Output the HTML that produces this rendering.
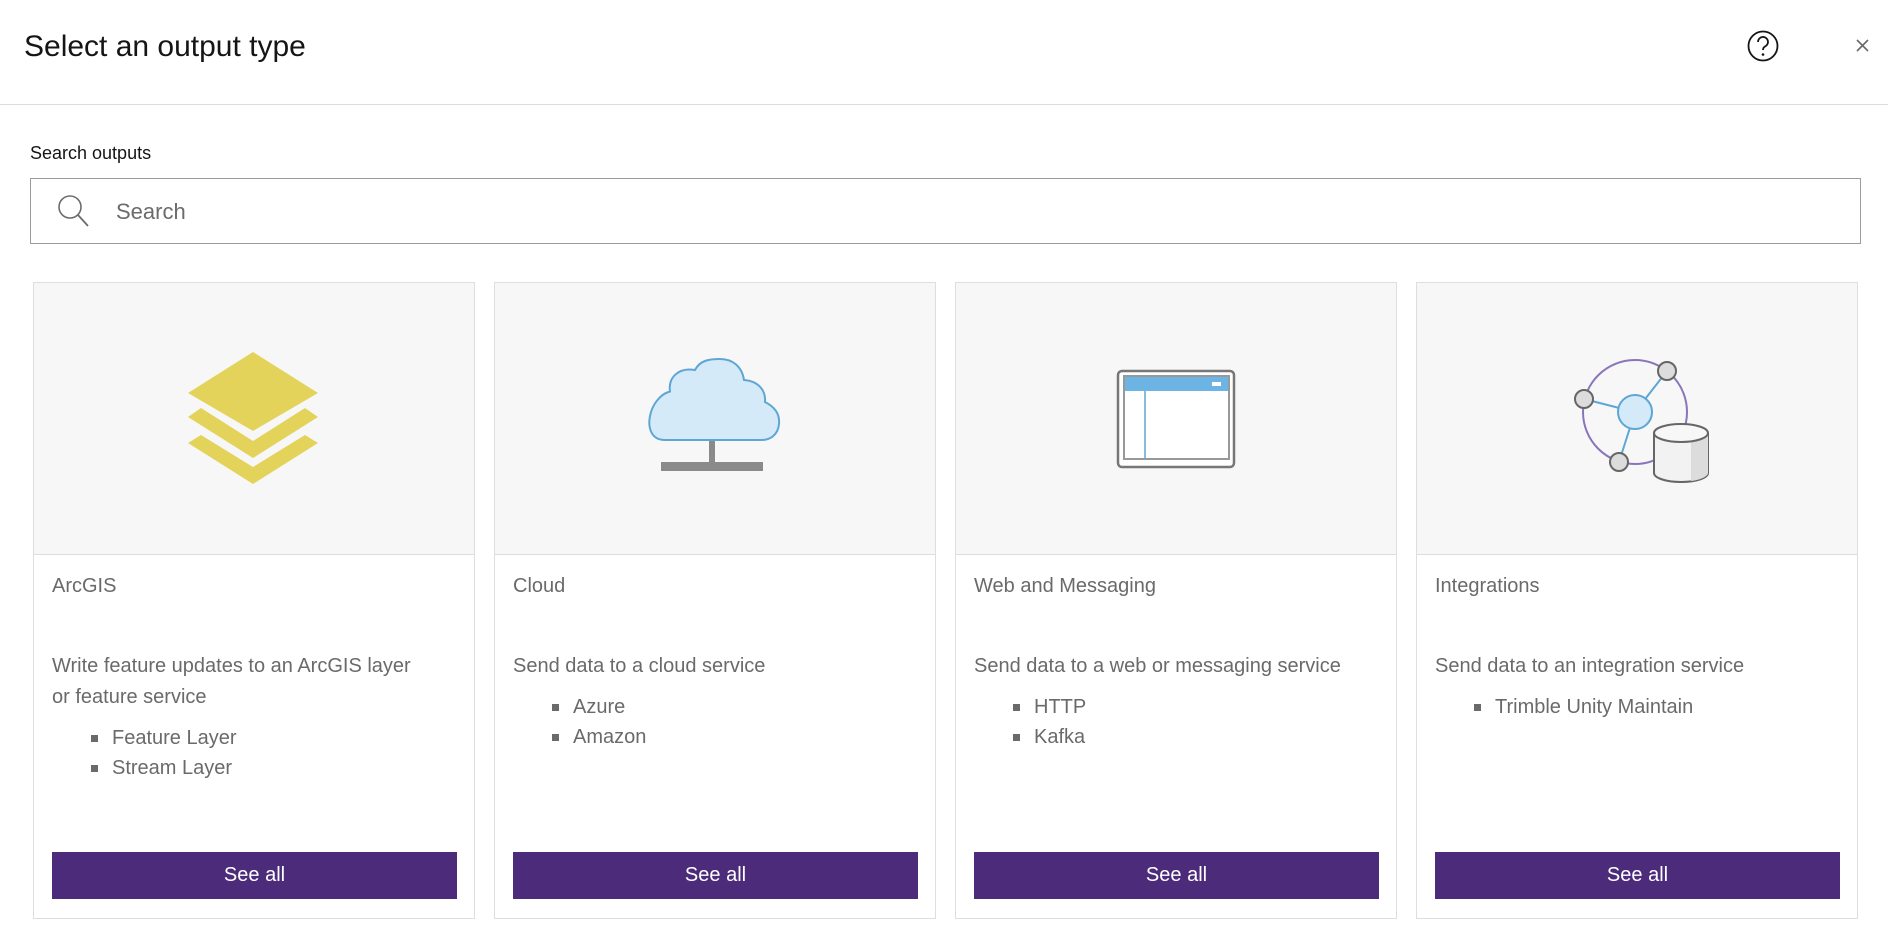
<!DOCTYPE html>
<html><head><meta charset="utf-8"><style>
*{box-sizing:border-box;margin:0;padding:0}
body{width:1888px;height:939px;background:#fff;font-family:"Liberation Sans",sans-serif;position:relative;overflow:hidden;color:#151515}
.title{position:absolute;left:24px;top:30px;font-size:30px;color:#151515}
.hdr{position:absolute;left:0;top:104px;width:1888px;border-top:1px solid #dcdcdc}
.lbl{position:absolute;left:30px;top:143px;font-size:18px}
.search{position:absolute;left:30px;top:178px;width:1831px;height:66px;border:1px solid #9c9c9c}
.search span{position:absolute;left:85px;top:20px;font-size:22px;color:#6b6b6b}
.card{position:absolute;top:282px;width:442px;height:637px;border:1px solid #dedede;background:#fff}
.img{height:272px;background:#f7f7f7;border-bottom:1px solid #dedede}
.ct{position:absolute;left:18px;top:292px;font-size:20px;color:#6a6a6a}
.cd{position:absolute;left:18px;top:368px;width:370px;font-size:20px;color:#6a6a6a;line-height:31px}
.cd ul{list-style:none;margin-top:10px}
.cd li{padding-left:60px;position:relative;line-height:30px}
.cd li:before{content:"";position:absolute;left:39px;top:12px;width:7px;height:7px;background:#6a6a6a}
.btn{position:absolute;left:18px;top:569px;width:405px;height:47px;background:#4c2c7a;color:#fff;font-size:20px;text-align:center;line-height:47px}
svg.ov{position:absolute;left:0;top:0}
</style></head><body>
<div class="title">Select an output type</div>
<div class="hdr"></div>
<div class="lbl">Search outputs</div>
<div class="search"><span>Search</span></div>
<div class="card" style="left:33px"><div class="img"></div><div class="ct">ArcGIS</div><div class="cd">Write feature updates to an ArcGIS layer or feature service<ul><li>Feature Layer</li><li>Stream Layer</li></ul></div><div class="btn">See all</div></div>
<div class="card" style="left:494px"><div class="img"></div><div class="ct">Cloud</div><div class="cd" style="width:410px">Send data to a cloud service<ul><li>Azure</li><li>Amazon</li></ul></div><div class="btn">See all</div></div>
<div class="card" style="left:955px"><div class="img"></div><div class="ct">Web and Messaging</div><div class="cd" style="width:410px">Send data to a web or messaging service<ul><li>HTTP</li><li>Kafka</li></ul></div><div class="btn">See all</div></div>
<div class="card" style="left:1416px"><div class="img"></div><div class="ct">Integrations</div><div class="cd" style="width:410px">Send data to an integration service<ul><li>Trimble Unity Maintain</li></ul></div><div class="btn">See all</div></div>
<svg class="ov" width="1888" height="939" viewBox="0 0 1888 939">
<circle cx="1763" cy="46" r="14.5" fill="none" stroke="#151515" stroke-width="1.8"/>
<path d="M1758 42a5 5 0 1 1 7 4.5c-1.5.8-2 1.8-2 3.5" fill="none" stroke="#151515" stroke-width="1.8"/>
<circle cx="1763" cy="54.5" r="1.3" fill="#151515"/>
<path d="M1857 40l11 11M1868 40l-11 11" stroke="#6a6a6a" stroke-width="1.6"/>
<circle cx="70" cy="207" r="11" fill="none" stroke="#6b6b6b" stroke-width="1.6"/>
<path d="M78 215l10 11" stroke="#6b6b6b" stroke-width="1.8"/>
<g fill="#e3d35a">
<polygon points="253,352 318,393 253,431 188,393"/>
<polygon points="188,417 201,408 253,441 305,408 318,417 253,458"/>
<polygon points="188,443 201,435 253,467 305,435 318,443 253,484"/>
</g>
<path d="M665,440 C650,440 648,426 650,416 C652,405 660,394 670,391.5 C668,378 678,367 695,370 C700,360 710,359 720,359 C732,359 742,366 744,380 C758,381 766,390 765,402 C775,407 780,414 779,424 C778,435 770,440 762,440 Z" fill="#d4eaf8" stroke="#5ea6d3" stroke-width="2"/>
<rect x="709" y="441" width="6" height="23" fill="#8a8a8a"/>
<rect x="661" y="462" width="102" height="9" fill="#8a8a8a"/>
<rect x="1118" y="371" width="116" height="96" rx="4" fill="#fff" stroke="#777" stroke-width="2.5"/>
<rect x="1124" y="376" width="105" height="83" fill="#fff" stroke="#999" stroke-width="2"/>
<rect x="1125" y="377" width="103" height="14" fill="#6cb4e3"/>
<rect x="1212" y="382" width="9" height="4" fill="#fff"/>
<path d="M1145 391v68" stroke="#5ea6d3" stroke-width="1.5"/>
<circle cx="1635" cy="412" r="52" fill="none" stroke="#8a74bb" stroke-width="2"/>
<path d="M1635 412L1667 371M1635 412L1584 399M1635 412L1619 462" stroke="#5ea6d3" stroke-width="2"/>
<circle cx="1635" cy="412" r="17" fill="#d4eaf8" stroke="#5ea6d3" stroke-width="2"/>
<g fill="#dcdcdc" stroke="#666" stroke-width="2"><circle cx="1667" cy="371" r="9"/><circle cx="1584" cy="399" r="9"/><circle cx="1619" cy="462" r="9"/></g>
<path d="M1654 433v40a27 9 0 0 0 54 0v-40" fill="#f2f2f2" stroke="#666" stroke-width="2"/>
<path d="M1691 441v40a27 9 0 0 0 17-8v-40z" fill="#dcdcdc"/>
<ellipse cx="1681" cy="433" rx="27" ry="9" fill="#f7f7f7" stroke="#666" stroke-width="2"/>
</svg>
</body></html>
